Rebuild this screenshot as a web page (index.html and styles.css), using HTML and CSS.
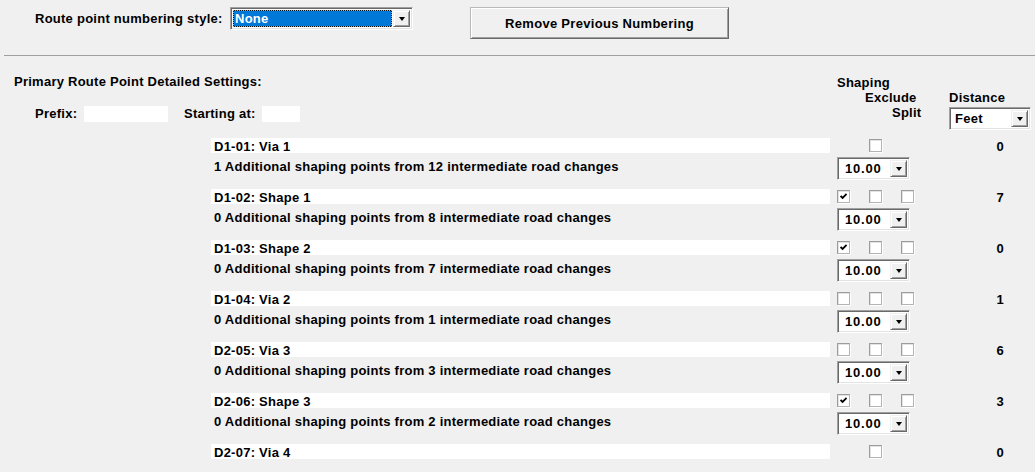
FILE: index.html
```html
<!DOCTYPE html>
<html lang="en">
<head>
<meta charset="utf-8">
<title>Route Point Numbering</title>
<link rel="stylesheet" href="styles.css">
</head>
<body>
<div class="top">
  <span class="top-label">Route point numbering style:</span>
  <div class="combo combo-style">
    <span class="combo-value is-selected"><span>None</span></span>
    <span class="combo-btn"><span class="arrow"></span></span>
  </div>
  <button class="btn">Remove Previous Numbering</button>
</div>
<div class="sep"></div>

<section class="settings">
  <div class="settings-head">
    <div class="head-left">
      <div class="title">Primary Route Point Detailed Settings:</div>
      <div class="prefix-row">
        <span class="lbl lbl-prefix">Prefix:</span>
        <span class="field field-prefix"></span>
        <span class="lbl lbl-start">Starting at:</span>
        <span class="field field-start"></span>
      </div>
    </div>
    <div class="col-heads">
      <div class="ch ch-shaping">Shaping</div>
      <div class="ch ch-exclude">Exclude</div>
      <div class="ch ch-split">Split</div>
    </div>
    <div class="dist-head">
      <div class="ch">Distance</div>
      <div class="combo combo-unit">
        <span class="combo-value"><span>Feet</span></span>
        <span class="combo-btn"><span class="arrow"></span></span>
      </div>
    </div>
  </div>

  <div class="points">
    <div class="point">
      <div class="name-row">
        <div class="name">D1-01: Via 1</div>
        <div class="checks"><span class="cb off"></span><span class="cb"></span><span class="cb off"></span></div>
        <div class="dist">0</div>
      </div>
      <div class="detail-row">
        <div class="detail">1 Additional shaping points from 12 intermediate road changes</div>
        <div class="combo combo-num"><span class="combo-value"><span>10.00</span></span><span class="combo-btn"><span class="arrow"></span></span></div>
      </div>
    </div>

    <div class="point">
      <div class="name-row">
        <div class="name">D1-02: Shape 1</div>
        <div class="checks"><span class="cb"><svg class="tick" viewBox="0 0 7 7"><polyline points="0.6,3 2.6,5 6.6,1"/></svg></span><span class="cb"></span><span class="cb"></span></div>
        <div class="dist">7</div>
      </div>
      <div class="detail-row">
        <div class="detail">0 Additional shaping points from 8 intermediate road changes</div>
        <div class="combo combo-num"><span class="combo-value"><span>10.00</span></span><span class="combo-btn"><span class="arrow"></span></span></div>
      </div>
    </div>

    <div class="point">
      <div class="name-row">
        <div class="name">D1-03: Shape 2</div>
        <div class="checks"><span class="cb"><svg class="tick" viewBox="0 0 7 7"><polyline points="0.6,3 2.6,5 6.6,1"/></svg></span><span class="cb"></span><span class="cb"></span></div>
        <div class="dist">0</div>
      </div>
      <div class="detail-row">
        <div class="detail">0 Additional shaping points from 7 intermediate road changes</div>
        <div class="combo combo-num"><span class="combo-value"><span>10.00</span></span><span class="combo-btn"><span class="arrow"></span></span></div>
      </div>
    </div>

    <div class="point">
      <div class="name-row">
        <div class="name">D1-04: Via 2</div>
        <div class="checks"><span class="cb"></span><span class="cb"></span><span class="cb"></span></div>
        <div class="dist">1</div>
      </div>
      <div class="detail-row">
        <div class="detail">0 Additional shaping points from 1 intermediate road changes</div>
        <div class="combo combo-num"><span class="combo-value"><span>10.00</span></span><span class="combo-btn"><span class="arrow"></span></span></div>
      </div>
    </div>

    <div class="point">
      <div class="name-row">
        <div class="name">D2-05: Via 3</div>
        <div class="checks"><span class="cb"></span><span class="cb"></span><span class="cb"></span></div>
        <div class="dist">6</div>
      </div>
      <div class="detail-row">
        <div class="detail">0 Additional shaping points from 3 intermediate road changes</div>
        <div class="combo combo-num"><span class="combo-value"><span>10.00</span></span><span class="combo-btn"><span class="arrow"></span></span></div>
      </div>
    </div>

    <div class="point">
      <div class="name-row">
        <div class="name">D2-06: Shape 3</div>
        <div class="checks"><span class="cb"><svg class="tick" viewBox="0 0 7 7"><polyline points="0.6,3 2.6,5 6.6,1"/></svg></span><span class="cb"></span><span class="cb"></span></div>
        <div class="dist">3</div>
      </div>
      <div class="detail-row">
        <div class="detail">0 Additional shaping points from 2 intermediate road changes</div>
        <div class="combo combo-num"><span class="combo-value"><span>10.00</span></span><span class="combo-btn"><span class="arrow"></span></span></div>
      </div>
    </div>

    <div class="point">
      <div class="name-row">
        <div class="name">D2-07: Via 4</div>
        <div class="checks"><span class="cb off"></span><span class="cb"></span><span class="cb off"></span></div>
        <div class="dist">0</div>
      </div>
    </div>
  </div>
</section>
</body>
</html>
```

FILE: styles.css
```css
* { box-sizing: border-box; }

html, body {
  margin: 0;
  padding: 0;
  background: #f0f0f0;
  color: #000;
  font-family: "Liberation Sans", Arial, sans-serif;
  font-weight: bold;
  font-size: 13px;
  letter-spacing: 0.25px;
  overflow: hidden;
}

/* ---------- top toolbar ---------- */
.top {
  display: flex;
  align-items: flex-start;
  height: 48px;
  padding: 7px 0 0 35px;
}
.top-label {
  width: 195px;
  line-height: 23px;
  white-space: nowrap;
}
.btn {
  margin-left: 57px;
  width: 259px;
  height: 32px;
  padding: 0;
  font: inherit;
  letter-spacing: 0.3px;
  color: #000;
  background: #f0f0f0;
  border: 1px solid;
  border-color: #b9b9b9 #696969 #696969 #b9b9b9;
  box-shadow: inset 1px 1px #fff, inset -1px -1px #a0a0a0;
}

.sep {
  margin: 7px 0 0 4px;
  height: 1px;
  background: #a0a0a0;
}

/* ---------- combo boxes ---------- */
.combo {
  display: flex;
  height: 23px;
  background: #fff;
  border: 1px solid;
  border-color: #a0a0a0 #fff #fff #a0a0a0;
  box-shadow: inset 1px 1px #696969, inset -1px -1px #e3e3e3;
  padding: 2px;
}
.combo-value {
  flex: 1;
  display: flex;
  align-items: center;
  padding-left: 3px;
  line-height: 15px;
  white-space: nowrap;
  overflow: hidden;
}
.combo-value.is-selected {
  color: #fff;
  border: 1px dotted #f39a2b;
  background: linear-gradient(#0078d7, #0078d7) padding-box, #111 border-box;
  padding-left: 1px;
  margin-right: 1px;
}
.combo-btn {
  width: 17px;
  display: flex;
  align-items: center;
  justify-content: center;
  background: #f0f0f0;
  border: 1px solid;
  border-color: #f0f0f0 #696969 #696969 #f0f0f0;
  box-shadow: inset 1px 1px #fff, inset -1px -1px #a0a0a0;
}
.arrow {
  width: 0;
  height: 0;
  border-left: 3.5px solid transparent;
  border-right: 3.5px solid transparent;
  border-top: 4px solid #000;
}
.combo-style { width: 183px; }
.combo-unit { width: 82px; margin-top: 2px; }
.combo-num { width: 73px; margin-left: 7px; }
.combo-num .combo-value { padding-left: 5px; letter-spacing: 0.8px; }

/* ---------- settings header ---------- */
.settings-head {
  display: flex;
  align-items: flex-start;
  padding-top: 18px;
}
.head-left {
  width: 837px;
  padding-left: 14px;
}
.title { line-height: 16px; }
.prefix-row {
  display: flex;
  align-items: center;
  margin-top: 16px;
  padding-left: 21px;
  height: 16px;
  line-height: 16px;
}
.lbl-prefix { width: 49px; }
.lbl-start { width: 78px; margin-left: 16px; }
.field { height: 16px; background: #fff; }
.field-prefix { width: 84px; }
.field-start { width: 38px; }

.col-heads { width: 112px; margin-top: 1px; }
.ch { line-height: 15px; white-space: nowrap; }
.ch-exclude { padding-left: 28px; }
.ch-split { padding-left: 55px; }

.dist-head { margin-top: 16px; }

/* ---------- route point list ---------- */
.points { padding: 8px 0 0 211px; }
.point { margin-bottom: 9px; }

.name-row {
  display: flex;
  align-items: flex-start;
  height: 15px;
}
.name {
  width: 619px;
  height: 15px;
  background: #fff;
  padding: 1px 0 0 3px;
  line-height: 15px;
  white-space: nowrap;
}
.checks {
  display: flex;
  gap: 19px;
  margin: 1px 0 0 7px;
}
.cb {
  position: relative;
  width: 13px;
  height: 13px;
  background: #fff;
  border: 1px solid;
  border-color: #9c9c9c #b4b4b4 #b4b4b4 #9c9c9c;
  box-shadow: 1px 1px 0 #fff, inset 1px 1px #e3e3e3;
}
.cb.off { visibility: hidden; }
.tick {
  position: absolute;
  left: 2px;
  top: 2px;
  width: 7px;
  height: 7px;
  fill: none;
  stroke: #000;
  stroke-width: 1.8;
}
.dist {
  width: 90px;
  text-align: right;
  line-height: 15px;
  padding-top: 1px;
}

.detail-row {
  display: flex;
  align-items: flex-start;
  margin-top: 4px;
  height: 23px;
}
.detail {
  width: 619px;
  padding: 2px 0 0 3px;
  line-height: 15px;
  white-space: nowrap;
}
```
